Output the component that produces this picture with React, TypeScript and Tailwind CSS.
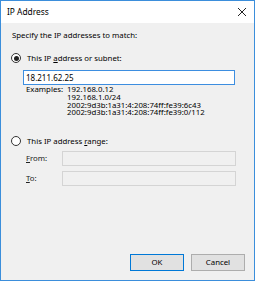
import React from "react";

function Radio({ checked }: { checked?: boolean }) {
  return (
    <div className="w-[10px] h-[10px] rounded-full border border-[#333333] bg-white flex items-center justify-center shrink-0">
      {checked && <div className="w-[5px] h-[5px] rounded-full bg-[#222222]" />}
    </div>
  );
}

export default function App() {
  return (
    <div
      className="w-[255px] h-[281px] border border-[#3b8edb] bg-[#f0f0f0] flex flex-col text-black text-[7.8px] overflow-hidden"
      style={{ fontFamily: '"Noto Sans", "Open Sans", sans-serif' }}
    >
      <div className="h-[22px] bg-white flex items-center justify-between pl-[6px] pr-[6px] shrink-0">
        <span className="text-[8.4px] leading-[10px]">IP Address</span>
        <svg width="10" height="10" viewBox="0 0 10 10" className="mr-[1px]">
          <path d="M1 1 L9 9 M9 1 L1 9" stroke="#222" strokeWidth="1" />
        </svg>
      </div>
      <div className="flex-1 flex flex-col">
        <div className="mt-[7px] ml-[11px] leading-[10px]">Specify the IP addresses to match:</div>
        <div className="mt-[13px] ml-[10px] h-[10px] flex items-center gap-[6px]">
          <Radio checked />
          <span className="leading-[10px]">
            This IP <span className="underline underline-offset-1">a</span>ddress or subnet:
          </span>
        </div>
        <div className="mt-[7px] ml-[22px] w-[212px] h-[15px] border border-[#3d8ee0] bg-white flex items-center pl-[2px] text-[8px]">
          18.211.62.25
        </div>
        <div className="mt-[1px] ml-[25px] flex leading-[7.8px]">
          <div className="w-[41px] shrink-0">Examples:</div>
          <div className="flex flex-col">
            <span>192.168.0.12</span>
            <span>192.168.1.0/24</span>
            <span>2002:9d3b:1a31:4:208:74ff:fe39:6c43</span>
            <span>2002:9d3b:1a31:4:208:74ff:fe39:0/112</span>
          </div>
        </div>
        <div className="mt-[19px] ml-[10px] h-[10px] flex items-center gap-[6px]">
          <Radio />
          <span className="leading-[10px]">
            This IP address <span className="underline underline-offset-1">r</span>ange:
          </span>
        </div>
        <div className="mt-[5px] ml-[25px] flex items-center">
          <span className="w-[36px] shrink-0 text-[#222]">
            <span className="underline underline-offset-1">F</span>rom:
          </span>
          <div className="w-[174px] h-[15px] border border-[#d4d4d4] bg-[#f0f0f0]" />
        </div>
        <div className="mt-[5px] ml-[25px] flex items-center">
          <span className="w-[36px] shrink-0 text-[#222]">
            <span className="underline underline-offset-1">T</span>o:
          </span>
          <div className="w-[174px] h-[15px] border border-[#d4d4d4] bg-[#f0f0f0]" />
        </div>
        <div className="mt-auto flex justify-end gap-[7px] pr-[9px] pb-[9px]">
          <div className="w-[54px] h-[17px] border border-[#0078d7] bg-[#e1e1e1] flex items-center justify-center">
            OK
          </div>
          <div className="w-[54px] h-[17px] border border-[#adadad] bg-[#e1e1e1] flex items-center justify-center">
            Cancel
          </div>
        </div>
      </div>
    </div>
  );
}
